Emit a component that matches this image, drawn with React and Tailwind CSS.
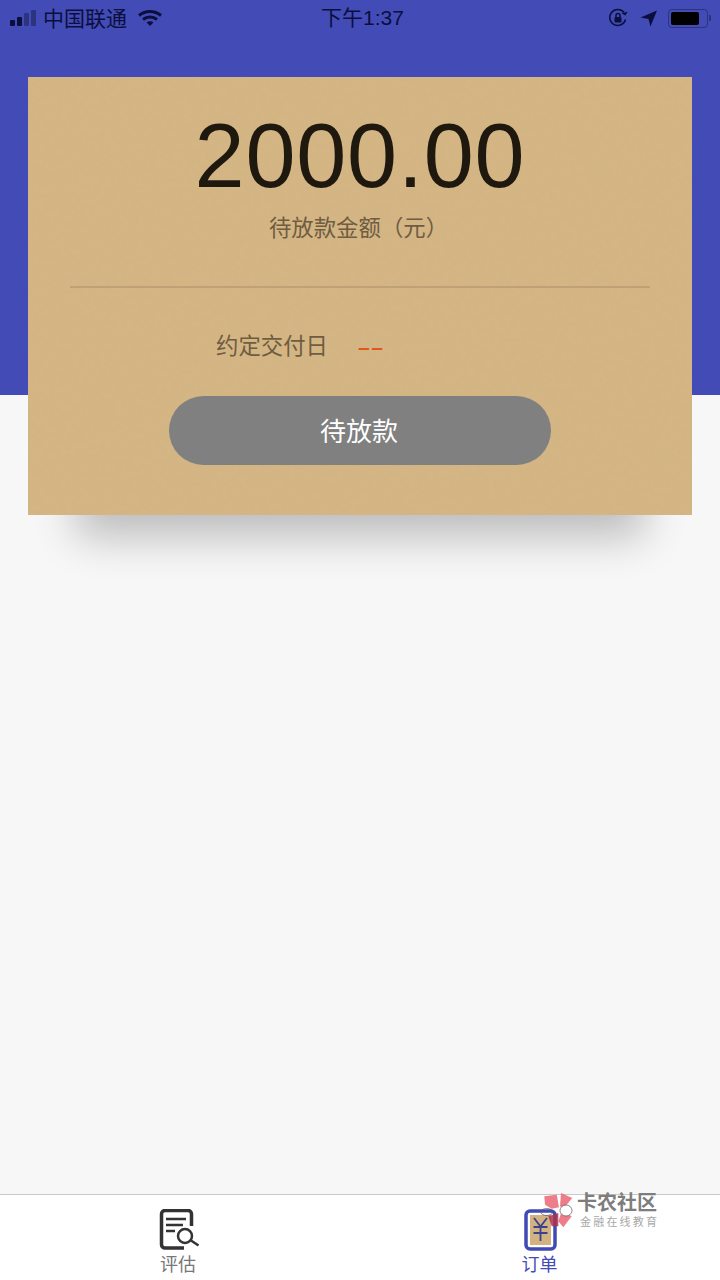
import React from "react";

const cjk = "font-['Liberation_Sans','Noto_Sans_CJK_SC',sans-serif]";

function PaperTexture() {
    return (
        <svg className="absolute inset-0 w-full h-full" aria-hidden="true">
            <filter id="paper" x="0" y="0" width="100%" height="100%">
                <feTurbulence type="fractalNoise" baseFrequency="0.18" numOctaves="4" seed="7" />
                <feColorMatrix values="0 0 0 0 0.62  0 0 0 0 0.46  0 0 0 0 0.26  2.5 0 0 0 -1" />
            </filter>
            <rect width="100%" height="100%" filter="url(#paper)" opacity="0.34" />
        </svg>
    );
}

function StatusBar() {
    return (
        <div className="h-9 flex items-center justify-between pl-[10px] pr-[9px] text-[#0b0f3d] relative">
            <div className="flex items-center">
                <div className="flex items-end gap-[2px] h-[16px]">
                    <span className="w-[5px] h-[6px] rounded-[1px] bg-[#0b0f3d]" />
                    <span className="w-[5px] h-[9px] rounded-[1px] bg-[#0b0f3d]" />
                    <span className="w-[5px] h-[13px] rounded-[1px] bg-[#2c3480]" />
                    <span className="w-[5px] h-[16px] rounded-[1px] bg-[#2c3480]" />
                </div>
                <span className="ml-[7px] text-[21px] leading-none">中国联通</span>
                <svg className="ml-[10px]" width="26" height="18" viewBox="0 0 26 18" fill="none" stroke="#0b0f3d" strokeWidth="3">
                    <path d="M2 6.500C8.500 1 17.500 1 24 6.500" />
                    <path d="M6 10.500C10 7.300 16 7.300 20 10.500" />
                    <path d="M13 17L9.500 13.300C11.500 11.900 14.500 11.900 16.500 13.300Z" fill="#0b0f3d" stroke="none" />
                </svg>
            </div>
            <span className="absolute left-[321px] top-[7px] text-[21px] leading-[22px]">下午1:37</span>
            <div className="flex items-center">
                <svg width="20" height="20" viewBox="0 0 20 20" fill="none" stroke="#0b0f3d" strokeWidth="1.500">
                    <path d="M17.500 11.500A8 8 0 1 1 16 4.500" />
                    <path d="M14 6.500L18.500 6.500L18.500 2Z" fill="#0b0f3d" stroke="none" transform="rotate(30 16 5)" />
                    <rect x="6.500" y="9" width="7" height="5.500" rx="1" fill="#0b0f3d" stroke="none" />
                    <path d="M8 9V7.500a2 2 0 0 1 4 0V9" />
                </svg>
                <svg className="ml-[12px]" width="17" height="17" viewBox="0 0 17 17" fill="#0b0f3d">
                    <path d="M17 0.500L0.500 7.500L8.500 9L10.500 16.500Z" />
                </svg>
                <div className="ml-[11px] w-[40px] h-[19px] rounded-[4px] border border-[#2c3480] p-[2px]">
                    <div className="w-[28px] h-full rounded-[2px] bg-black" />
                </div>
                <span className="ml-[1px] w-[2px] h-[6px] rounded-r-[1px] bg-[#2c3480]" />
            </div>
        </div>
    );
}

function AssessIcon() {
    return (
        <svg width="42" height="42" viewBox="0 0 42 42" fill="none" stroke="#333333">
            <path d="M25 39H6a3.500 3.500 0 0 1-3.500-3.500V5A3.500 3.500 0 0 1 6 1.500H29A3.500 3.500 0 0 1 32.500 5V17" strokeWidth="3.500" />
            <path d="M7 10H27M7 16H24M7 22H16" strokeWidth="2.500" />
            <circle cx="26" cy="27" r="7" strokeWidth="2.500" />
            <path d="M32 31.500L39.500 36.500" strokeWidth="2.500" />
        </svg>
    );
}

function OrderIcon() {
    return (
        <svg className="ml-[1px]" width="34" height="42" viewBox="0 0 34 42" fill="none">
            <rect x="2" y="2" width="29" height="38" rx="4" fill="#ffffff" stroke="#4149b4" strokeWidth="3.500" />
            <rect x="6" y="6" width="21" height="30" fill="#d2b280" />
            <path d="M10 9L16.500 17.500L23 9M9.500 18H23.500M9.500 24H23.500M16.500 17.500V32" stroke="#3a4290" strokeWidth="1.800" />
        </svg>
    );
}

function Watermark() {
    return (
        <div className="absolute left-[543px] top-[1192px] flex items-start">
            <svg className="overflow-visible" width="36" height="37" viewBox="0 0 36 37">
                <path d="M1.300 4.300L13.700 2.700L16 15.300L8.700 16.700L2 12.700Z" fill="#ec6f7d" fillOpacity="0.9" />
                <path d="M18 1L29.300 6L20.300 16.700L17 14.300Z" fill="#ec6f7d" fillOpacity="0.9" />
                <path d="M18.700 19.300L28.700 24.300L20.300 35.300L15.300 29.300Z" fill="#ec6f7d" fillOpacity="0.9" />
                <path d="M5.300 24.300L15.300 21L15.300 34.300L8.700 34.300Z" fill="#a8324f" fillOpacity="0.85" />
                <ellipse cx="3.700" cy="20" rx="6" ry="3.500" fill="none" stroke="#555555" strokeWidth="0.700" />
                <ellipse cx="23" cy="18.500" rx="6" ry="5.500" fill="#ffffff" stroke="#555555" strokeWidth="0.700" />
            </svg>
            <div className="flex flex-col items-start mt-[1px]">
                <span className="-ml-[2px] text-[20px] leading-[21px] font-bold text-[#7d7d7d]">卡农社区</span>
                <span className="ml-[1px] mt-[2px] text-[11px] leading-[13px] tracking-[2.200px] text-[#a8a8a8]">金融在线教育</span>
            </div>
        </div>
    );
}

export default function App() {
    return (
        <div className={`relative h-[1280px] w-[720px] overflow-hidden flex flex-col bg-[#f7f7f7] ${cjk}`}>
            <div className="h-[395px] bg-[#424bb6] shrink-0">
                <StatusBar />
            </div>

            <div className="flex-1 px-7 -mt-[318px]">
                <div className="relative h-[438px] bg-[#d4b583] shadow-[0_70px_40px_-48px_rgba(0,0,0,0.24)]">
                    <PaperTexture />
                    <div className="relative flex flex-col items-center">
                        <div className="mt-[31px] text-[90px] leading-[96px] tracking-[0.800px] text-[#1e180f]">2000.00</div>
                        <div className="mt-[9px] -ml-[3px] text-[22.400px] leading-[32px] text-[#6f5c41]">待放款金额（元）</div>
                        <div className="mt-[41px] w-[580px] h-[2px] bg-[#bea276]" />
                        <div className="mt-[41px] w-full flex items-center pl-[188px] h-[36px]">
                            <span className="text-[22.400px] leading-[32px] text-[#6f5c41]">约定交付日</span>
                            <span className="ml-[30px] text-[21px] leading-[32px] tracking-[1.500px] font-bold text-[#e2571e]">––</span>
                        </div>
                        <button className="mt-[31px] w-[382px] h-[69px] rounded-full bg-[#808080] text-white text-[26px] pt-[3px] pr-[2px]">
                            待放款
                        </button>
                    </div>
                </div>
            </div>

            <div className="h-[86px] shrink-0 bg-white border-t border-[#c9c9c9] grid grid-cols-2 pt-[14px]">
                <div className="flex flex-col items-center">
                    <AssessIcon />
                    <span className="mt-[4px] -ml-[4px] text-[18px] leading-[20px] text-[#777777]">评估</span>
                </div>
                <div className="flex flex-col items-center">
                    <OrderIcon />
                    <span className="mt-[4px] -ml-[1px] text-[18px] leading-[20px] text-[#424bb6]">订单</span>
                </div>
            </div>

            <Watermark />
        </div>
    );
}
